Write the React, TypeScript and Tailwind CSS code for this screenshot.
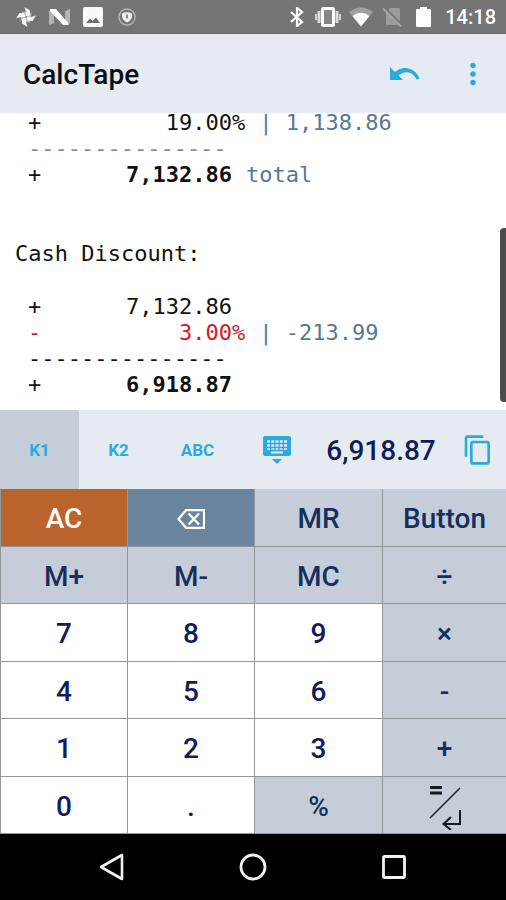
import type { ReactNode } from "react"
import clsx from "clsx"
import { MdContentCopy, MdMoreVert } from "react-icons/md"

function StatusBar() {
  return (
    <div className="flex h-[34px] items-center border-b border-[#666b6e] bg-[#757575] pr-[10px] pl-4 text-white">
      <div className="flex flex-1 items-center gap-[13px]">
        <svg viewBox="0 0 20 20" className="h-5 w-5" fill="#f4f4f4">
          <path d="M10 10V5L8.500 0 14 3.500V8z" />
          <path d="M10 10h5l5-1.500L16.500 14H12z" />
          <path d="M10 10v5l1.500 5L6 16.500V12z" />
          <path d="M10 10H5l-5 1.500L3.500 6H8z" />
          <path d="M10 10L5.500 4.500 10 5zM10 10l5.500-4.500L15 10zM10 10l4.500 5.500L10 15zM10 10l-5.500 4.500L5 10z" opacity=".6" />
          <circle cx="10" cy="10" r="1.200" fill="#999" />
        </svg>
        <svg viewBox="0 0 21 18" className="h-[18px] w-[21px]">
          <path d="M0 3l5-2v14l-5 2zM16 3l5-2v14l-5 2z" fill="#b4b4b4" />
          <path d="M1 1h6l13 15-1 1h-5L1 3z" fill="#fff" />
        </svg>
        <svg viewBox="0 0 20 20" className="h-5 w-5">
          <rect width="20" height="20" rx="2" fill="#f8f8f8" />
          <path d="M3 16l4-4.500 2.500 2.500L13 10.500 17 16z" fill="#6d6d6d" />
        </svg>
        <svg viewBox="0 0 18 18" className="ml-[2px] h-[18px] w-[18px]">
          <circle cx="9" cy="9" r="8" fill="none" stroke="#b5b5b5" strokeWidth="1.400" />
          <path d="M4 5.500Q9 3 14 5.500V8c0 3-2 5-5 6.500C6 13 4 11 4 8z" fill="#f0f0f0" />
          <path d="M9 6.500v4" stroke="#8a8a8a" strokeWidth="2" />
        </svg>
      </div>
      <div className="flex items-center gap-2">
        <svg viewBox="0 0 20 20" className="h-5 w-5" fill="none" stroke="#fff" strokeWidth="2.200">
          <path d="M4 5l11 10-5 4V1l5 4L4 15" />
        </svg>
        <svg viewBox="0 0 26 20" className="h-5 w-[26px]">
          <rect x="7.500" y="1.500" width="11" height="17" rx="1" fill="#858585" stroke="#fff" strokeWidth="3" />
          <path d="M4 4v12M22 4v12" stroke="#dcdcdc" strokeWidth="3" />
          <path d="M1 7v6M25 7v6" stroke="#dcdcdc" strokeWidth="1.800" />
        </svg>
        <svg viewBox="0 0 24 20" className="h-5 w-6">
          <path d="M0 5Q12-4 24 5L12 19.500z" fill="#a0a0a0" />
          <path d="M3.500 9Q12 2.500 20.500 9L12 19.500z" fill="#fff" />
        </svg>
        <svg viewBox="0 0 20 20" className="ml-[2px] h-5 w-5">
          <path d="M7 1h8.500Q17 1 17 2.500V18H3V5z" fill="#9c9c9c" />
          <path d="M1 0l18 18" stroke="#757575" strokeWidth="2" />
          <path d="M0 1.500l18 18" stroke="#a6a6a6" strokeWidth="1.800" />
        </svg>
        <svg viewBox="0 0 26 20" className="h-5 w-[26px]">
          <path d="M9 0h7v2h3q1 0 1 1v16q0 1-1 1H6q-1 0-1-1V3q0-1 1-1h3z" fill="#fff" />
        </svg>
        <span className="text-xl leading-5 font-medium">14:18</span>
      </div>
    </div>
  )
}

function Header() {
  return (
    <header className="flex h-[79px] items-center bg-[#e6ebf1] pr-4 pl-[23px]">
      <h1 className="flex-1 pt-[2px] text-[28px] font-medium text-[#0b0f14]">CalcTape</h1>
      <button aria-label="Undo" className="mr-9">
        <svg viewBox="0 0 30 14" className="h-[14px] w-[30px]">
          <path d="M0 0v13h13L8.500 8.500C14 3.500 22.500 3.500 26.500 12.500l3-1C25 .5 13-2 5 5z" fill="#29abe2" />
        </svg>
      </button>
      <button aria-label="More options">
        <MdMoreVert className="h-[34px] w-[34px] text-[#29abe2]" />
      </button>
    </header>
  )
}

type LineProps = {
  sign: string
  amount: string
  unit?: string
  note?: string
  tone?: string
  bold?: boolean
}

function Line({ sign, amount, unit, note, tone = "text-[#111]", bold }: LineProps) {
  return (
    <div className={clsx("flex whitespace-pre", tone)}>
      <span className="w-[66px]">{sign}</span>
      <span className={clsx("w-[138px] text-right", bold && "font-bold")}>{amount}</span>
      <span className="w-[14px]">{unit}</span>
      <span className="text-[#587796]">{note}</span>
    </div>
  )
}

function Tape() {
  return (
    <main className="relative flex min-h-[297px] flex-1 flex-col justify-end bg-white pb-3 font-['DejaVu_Sans_Mono',monospace] text-[22px] leading-[26px] text-[#111]">
      <div className="-mt-1 pl-7">
        <Line sign="+" amount="19.00" unit="%" note=" | 1,138.86" />
        <div className="text-[#888]">---------------</div>
        <Line sign="+" amount="7,132.86" note="total" bold />
      </div>
      <p className="mt-[53px] pl-[15px]">Cash Discount:</p>
      <div className="mt-[27px] pl-7">
        <Line sign="+" amount="7,132.86" />
        <Line sign="-" amount="3.00" unit="%" note=" | -213.99" tone="text-[#d5181e]" />
        <div>---------------</div>
        <Line sign="+" amount="6,918.87" bold />
      </div>
      <div className="absolute right-0 bottom-2 h-[174px] w-[6px] rounded-l-sm bg-[#4b4b4b]" />
    </main>
  )
}

const tabs = ["K1", "K2", "ABC"]

function Toolbar() {
  return (
    <div className="flex h-[79px] items-stretch bg-[#e6ebf1] pr-3">
      {tabs.map((tab, index) => (
        <button
          key={tab}
          className={clsx("w-[79px] pt-[2px] text-[17px] font-bold text-[#29abe2]", index === 0 && "bg-[#c5ced8]")}
        >
          {tab}
        </button>
      ))}
      <button aria-label="Hide keyboard" className="flex w-[79px] items-center justify-center">
        <svg viewBox="0 0 28 28" className="h-7 w-7">
          <rect width="28" height="20" rx="2" fill="#29abe2" />
          <g stroke="#e6ebf1" strokeWidth="2.600">
            <path d="M4 5.500h20M4 9.500h20" strokeDasharray="3 1.250" />
            <path d="M4 13h20" strokeWidth="1.500" strokeDasharray="3 1.250" />
            <path d="M8 16.500h12" strokeWidth="2" />
          </g>
          <path d="M9 23h10l-5 5z" fill="#29abe2" />
        </svg>
      </button>
      <output className="flex flex-1 items-center justify-center pt-[2px] pr-4 text-[28px] font-medium text-[#101c55]">
        6,918.87
      </output>
      <button aria-label="Copy result">
        <MdContentCopy className="h-8 w-8 text-[#29abe2]" />
      </button>
    </div>
  )
}

const backspace = (
  <svg viewBox="0 0 28 20" className="h-5 w-7" fill="none" stroke="#fff">
    <path d="M9 1.200h18v17.600H9L1.500 10z" strokeWidth="2.200" />
    <path d="M11.500 4.500l10.500 11M22 4.500l-10.500 11" strokeWidth="2.400" />
  </svg>
)

const enter = (
  <svg viewBox="0 0 32 46" className="h-[46px] w-8" fill="none" stroke="#151a20">
    <path d="M1 3.500h12M1 9h12" strokeWidth="2.800" />
    <path d="M1 34L31 4" strokeWidth="1.500" />
    <path d="M31 26v14H15M22 33l-7.500 7 7.500 6" strokeWidth="2" />
  </svg>
)

type Key = { label: string; icon?: ReactNode; style: string }

const soft = "bg-[#c5ced8] text-[#172f5f]"
const plain = "bg-white text-[#101c5c]"

const keys: Key[] = [
  { label: "AC", style: "bg-[#bb632c] text-white" },
  { label: "Backspace", icon: backspace, style: "bg-[#6a849d]" },
  { label: "MR", style: soft },
  { label: "Button", style: soft },
  { label: "M+", style: soft },
  { label: "M-", style: soft },
  { label: "MC", style: soft },
  { label: "÷", style: soft },
  { label: "7", style: plain },
  { label: "8", style: plain },
  { label: "9", style: plain },
  { label: "×", style: soft },
  { label: "4", style: plain },
  { label: "5", style: plain },
  { label: "6", style: plain },
  { label: "-", style: soft },
  { label: "1", style: plain },
  { label: "2", style: plain },
  { label: "3", style: plain },
  { label: "+", style: soft },
  { label: "0", style: plain },
  { label: ".", style: plain },
  { label: "%", style: soft },
  { label: "Enter", icon: enter, style: soft },
]

function Keypad() {
  return (
    <div className="grid h-[345px] grid-cols-[126fr_126fr_127fr_123fr] grid-rows-6 gap-px bg-[#92979c] pb-px pl-px text-[28px] font-medium">
      {keys.map((key) => (
        <button
          key={key.label}
          aria-label={key.icon ? key.label : undefined}
          className={clsx("flex min-h-0 min-w-0 items-center justify-center pt-1", key.style)}
        >
          {key.icon ?? key.label}
        </button>
      ))}
    </div>
  )
}

function NavBar() {
  return (
    <nav className="flex h-[66px] items-center justify-center gap-[114px] bg-black">
      <button aria-label="Back">
        <svg viewBox="0 0 26 28" className="h-7 w-[26px]" fill="none" stroke="#f2f2f2" strokeWidth="2.600">
          <path d="M23 2v24L2 14z" strokeLinejoin="round" />
        </svg>
      </button>
      <button aria-label="Home">
        <svg viewBox="0 0 28 28" className="h-7 w-7" fill="none" stroke="#f2f2f2" strokeWidth="2.800">
          <circle cx="14" cy="14" r="12" />
        </svg>
      </button>
      <button aria-label="Recent apps">
        <svg viewBox="0 0 26 26" className="h-[26px] w-[26px]" fill="none" stroke="#f2f2f2" strokeWidth="2.800">
          <rect x="2.500" y="2.500" width="21" height="21" rx="1" />
        </svg>
      </button>
    </nav>
  )
}

export default function App() {
  return (
    <div className="flex min-h-screen flex-col bg-white font-['Roboto',sans-serif]">
      <StatusBar />
      <Header />
      <Tape />
      <Toolbar />
      <Keypad />
      <NavBar />
    </div>
  )
}
